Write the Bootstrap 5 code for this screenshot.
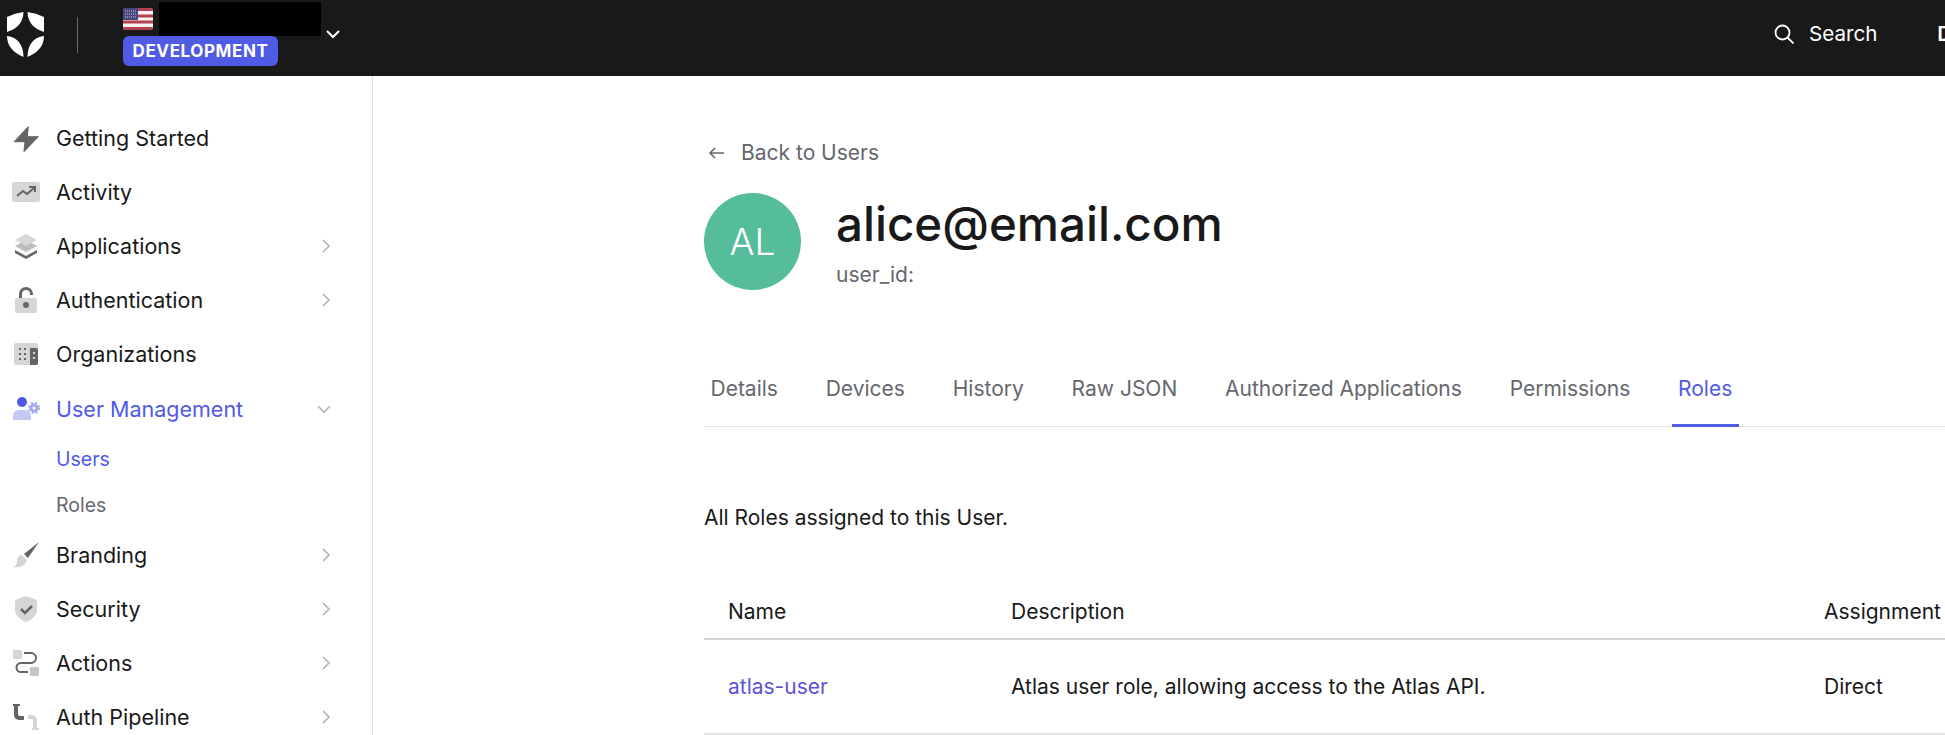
<!DOCTYPE html>
<html lang="en">
<head>
    <meta charset="UTF-8">
    <meta name="viewport" content="width=device-width, initial-scale=1.0">
    <title>User Details</title>
    <link href="https://cdn.jsdelivr.net/npm/bootstrap@5.3.3/dist/css/bootstrap.min.css" rel="stylesheet">
    <style>
        html, body {
            height: 100%;
            overflow: hidden;
        }

        body {
            font-family: Inter, "Liberation Sans", sans-serif;
            font-size: 21px;
            color: #191919;
            background-color: #ffffff;
        }

        .top-bar {
            height: 76px;
            padding-bottom: 7px;
            background-color: #191919;
            color: #ffffff;
        }

        .logo-box {
            width: 77px;
            padding-left: 7px;
        }

        .bar-sep {
            width: 1px;
            height: 36px;
            background-color: #65676e;
        }

        .tenant-box {
            margin-left: 45px;
            width: 155px;
            align-self: flex-start;
            padding-top: 2px;
        }

        .flag-row {
            height: 34px;
            width: 198px;
        }

        .redact-box {
            width: 162px;
            height: 34px;
            background-color: #000000;
            margin-left: 6px;
            flex-shrink: 0;
        }

        .env-tag {
            background-color: #4f5ae5;
            border-radius: 6px;
            font-size: 17px;
            font-weight: 700;
            letter-spacing: .6px;
            height: 30px;
            line-height: 30px;
            width: 155px;
            text-align: center;
        }

        .tenant-caret {
            margin-left: 47px;
            margin-top: -1px;
        }

        .search-box {
            margin-left: auto;
            gap: 15px;
            font-size: 20.600px;
            width: 171px;
            white-space: nowrap;
            overflow: hidden;
        }

        .user-initial {
            font-weight: 600;
            margin-left: 45px;
        }

        .page-body {
            height: 659px;
        }

        .side-col {
            width: 373px;
            flex-shrink: 0;
            border-right: 1px solid #e3e3e5;
            padding-top: 35px;
        }

        .side-link {
            height: 54px;
            flex-shrink: 0;
            font-size: 21.500px;
            padding: 0 41px 0 12px;
            color: #191919;
        }

        .side-link svg.ico {
            width: 28px;
            height: 28px;
            margin-right: 16px;
            flex-shrink: 0;
        }

        .side-link .arrow {
            margin-left: auto;
        }

        .side-link.is-open {
            color: #4f5ae5;
            height: 56px;
        }

        .side-sub {
            display: block;
            flex-shrink: 0;
            padding-left: 56px;
            color: #65676e;
            font-size: 19.500px;
            line-height: 45.500px;
        }

        .side-sub.is-on {
            color: #4f5ae5;
        }

        .content-col {
            padding-left: 331px;
            padding-top: 61px;
            min-width: 0;
            flex-grow: 1;
            overflow: hidden;
        }

        .back-link {
            color: #65676e;
            height: 32px;
            gap: 17px;
        }

        .user-head {
            margin-top: 24px;
            height: 97px;
        }

        .avatar-dot {
            width: 97px;
            height: 97px;
            background-color: #55bc9c;
            color: #ffffff;
            font-size: 37px;
            font-weight: 300;
            margin-right: 35px;
        }

        .user-text {
            padding-top: 4px;
        }

        .user-mail {
            font-size: 47.500px;
            font-weight: 500;
            line-height: 56px;
            margin: 0;
        }

        .user-idline {
            color: #65676e;
            font-size: 21px;
            margin-top: 7px;
        }

        .tab-strip {
            margin-top: 69px;
            border-bottom: 1px solid #e3e3e5;
            gap: 34.800px;
            font-size: 21px;
            width: 1800px;
        }

        .tab-strip .nav-link {
            color: #65676e;
            padding: 0 6.500px;
            height: 68px;
            line-height: 60px;
            border-bottom: 3px solid transparent;
            margin-bottom: -1px;
        }

        .tab-strip .nav-link.active {
            color: #4f5ae5;
            border-bottom-color: #4f5ae5;
        }

        .tab-note {
            margin: 0;
            padding-top: 77px;
            line-height: 27px;
        }

        .roles-table {
            margin-top: 54px;
            width: 1469px;
            table-layout: fixed;
        }

        .roles-table th {
            font-weight: 400;
            padding: 0 24px;
            height: 54px;
            border-bottom: 2px solid #d6d6d8;
            vertical-align: middle;
        }

        .roles-table td {
            padding: 0 24px;
            height: 95px;
            vertical-align: middle;
            border-bottom: 2px solid #e3e3e5;
        }

        .role-link {
            color: #5a55d2;
            text-decoration: none;
        }
    </style>
</head>
<body>
    <header class="top-bar d-flex align-items-center">
        <div class="logo-box d-flex align-items-center">
            <svg width="38" height="46" viewBox="0 0 38 46" fill="#fff">
                <path d="M0 5Q8 1 16.500 0Q16 15 0 20Z"/>
                <path d="M20.500 0Q29 1 37 5V20Q21 15 20.500 0Z"/>
                <path d="M0 24Q16 26 16.500 45Q0 38 0 24Z"/>
                <path d="M37 24Q21 26 20.500 45Q37 38 37 24Z"/>
            </svg>
        </div>
        <div class="bar-sep"></div>
        <div class="tenant-box">
            <div class="flag-row d-flex align-items-center">
                <svg width="30" height="22" viewBox="0 0 30 22" class="flex-shrink-0">
                    <rect width="30" height="22" rx="3" fill="#f4f4f4"/>
                    <path d="M0 3a3 3 0 0 1 3-3h24a3 3 0 0 1 3 3H0ZM0 6.500h30v3H0ZM0 12.500h30v3H0ZM0 19h30a3 3 0 0 1-3 3H3a3 3 0 0 1-3-3Z" fill="#b5404f"/>
                    <path d="M0 3a3 3 0 0 1 3-3h12v12H0Z" fill="#46467f"/>
                    <path d="M2 3h11M2 6h11M2 9h11" stroke="#c9c9dd" stroke-width="1.200" stroke-dasharray="1 1"/>
                </svg>
                <div class="redact-box"></div>
            </div>
            <div class="env-tag">DEVELOPMENT</div>
        </div>
        <svg class="tenant-caret" width="16" height="10" viewBox="0 0 16 10" fill="none" stroke="#fff" stroke-width="2"><path d="M2 2l6 6 6-6"/></svg>
        <div class="search-box d-flex align-items-center">
            <svg class="flex-shrink-0" width="20" height="20" viewBox="0 0 20 20" fill="none" stroke="#fff" stroke-width="1.800"><circle cx="8.500" cy="8.500" r="7"/><path d="M13.500 13.500l6 6"/></svg>
            <span>Search</span>
            <span class="user-initial">D</span>
        </div>
    </header>

    <div class="page-body d-flex">
        <nav class="side-col nav flex-column flex-nowrap">
            <a class="side-link d-flex align-items-center text-decoration-none" href="#">
                <svg class="ico" viewBox="0 0 28 28"><path d="M16.300 2.700L2 17.700H13L12 27.700L26.300 12.700H15.300Z" fill="#656565" stroke="#656565" stroke-linejoin="round"/></svg>
                Getting Started
            </a>
            <a class="side-link d-flex align-items-center text-decoration-none" href="#">
                <svg class="ico" viewBox="0 0 28 28"><rect y="4" width="28" height="20" rx="2" fill="#d6d6d6"/><path d="M5 18l6-5 4 3 7-6M17 9h6v5" fill="none" stroke="#656565" stroke-width="2"/></svg>
                Activity
            </a>
            <a class="side-link d-flex align-items-center text-decoration-none" href="#">
                <svg class="ico" viewBox="0 0 28 28"><path d="M3 18l11 6 11-6v3l-11 6-11-6z" fill="#656565"/><path d="M3 14l11 6 11-6-11-6z" fill="#bdbdbd"/><path d="M3 8l11 6 11-6-11-6z" fill="#d6d6d6"/></svg>
                Applications
                <svg class="arrow" width="10" height="14" viewBox="0 0 10 14" fill="none" stroke="#b3b3b3" stroke-width="1.600"><path d="M2 1l6 6-6 6"/></svg>
            </a>
            <a class="side-link d-flex align-items-center text-decoration-none" href="#">
                <svg class="ico" viewBox="0 0 28 28"><path d="M7 13V8a7 7 0 0 1 14 0v1h-3V8a4 4 0 0 0-8 0v5z" fill="#656565"/><rect x="3" y="12" width="22" height="15" rx="2" fill="#d6d6d6"/><circle cx="14" cy="19" r="3" fill="#656565"/></svg>
                Authentication
                <svg class="arrow" width="10" height="14" viewBox="0 0 10 14" fill="none" stroke="#b3b3b3" stroke-width="1.600"><path d="M2 1l6 6-6 6"/></svg>
            </a>
            <a class="side-link d-flex align-items-center text-decoration-none" href="#">
                <svg class="ico" viewBox="0 0 28 28"><rect x="2" y="3" width="24" height="22" rx="2" fill="#d6d6d6"/><path d="M18 8h6a2 2 0 0 1 2 2v13a2 2 0 0 1-2 2h-6z" fill="#656565"/><path d="M7 8h2v2H7zM12 8h2v2h-2zM7 13h2v2H7zM12 13h2v2h-2zM7 18h2v2H7zM12 18h2v2h-2z" fill="#656565"/><path d="M21 12h2v2h-2zM21 17h2v2h-2z" fill="#d6d6d6"/></svg>
                Organizations
            </a>
            <a class="side-link is-open d-flex align-items-center text-decoration-none" href="#">
                <svg class="ico" viewBox="0 0 28 28"><circle cx="10" cy="7" r="5" fill="#4f5ae5"/><path d="M1 25v-4a6 6 0 0 1 6-6h6a6 6 0 0 1 6 6v4z" fill="#c5c8f5"/><circle cx="22" cy="13" r="3" fill="none" stroke="#a6abf0" stroke-width="3"/><circle cx="22" cy="13" r="5" fill="none" stroke="#a6abf0" stroke-width="2" stroke-dasharray="2 2"/></svg>
                User Management
                <svg class="arrow" width="14" height="10" viewBox="0 0 14 10" fill="none" stroke="#b3b3b3" stroke-width="1.600"><path d="M1 2l6 6 6-6"/></svg>
            </a>
            <a class="side-sub is-on text-decoration-none" href="#">Users</a>
            <a class="side-sub text-decoration-none" href="#">Roles</a>
            <a class="side-link d-flex align-items-center text-decoration-none" href="#">
                <svg class="ico" viewBox="0 0 28 28"><path d="M27 1L12 13l4 4z" fill="#656565"/><path d="M10 14l5 5c-1 6-8 8-14 7 4-2 4-4 4-7 0-3 2-5 5-5z" fill="#d6d6d6"/></svg>
                Branding
                <svg class="arrow" width="10" height="14" viewBox="0 0 10 14" fill="none" stroke="#b3b3b3" stroke-width="1.600"><path d="M2 1l6 6-6 6"/></svg>
            </a>
            <a class="side-link d-flex align-items-center text-decoration-none" href="#">
                <svg class="ico" viewBox="0 0 28 28"><path d="M14 1l11 4v10c0 6-6 10-11 12C9 25 3 21 3 15V5z" fill="#d6d6d6"/><path d="M9 14l4 4 7-7" fill="none" stroke="#656565" stroke-width="2.500"/></svg>
                Security
                <svg class="arrow" width="10" height="14" viewBox="0 0 10 14" fill="none" stroke="#b3b3b3" stroke-width="1.600"><path d="M2 1l6 6-6 6"/></svg>
            </a>
            <a class="side-link d-flex align-items-center text-decoration-none" href="#">
                <svg class="ico" viewBox="0 0 28 28"><rect x="1" y="1" width="9" height="9" rx="1" fill="#d6d6d6"/><rect x="18" y="18" width="9" height="9" rx="1" fill="#c4c4c4"/><path d="M12 4h7a5 5 0 0 1 0 10H9a4.500 4.500 0 0 0 0 9h7" fill="none" stroke="#656565" stroke-width="2"/></svg>
                Actions
                <svg class="arrow" width="10" height="14" viewBox="0 0 10 14" fill="none" stroke="#b3b3b3" stroke-width="1.600"><path d="M2 1l6 6-6 6"/></svg>
            </a>
            <a class="side-link d-flex align-items-center text-decoration-none" href="#">
                <svg class="ico" viewBox="0 0 28 28"><path d="M1 1h7v2H6v8a2 2 0 0 0 2 2h4v4H7a5 5 0 0 1-5-5V3H1z" fill="#656565"/><path d="M16 12h4a5 5 0 0 1 5 5v8h2v2h-7v-2h1v-8a1 1 0 0 0-1-1h-4z" fill="#d6d6d6"/></svg>
                Auth Pipeline
                <svg class="arrow" width="10" height="14" viewBox="0 0 10 14" fill="none" stroke="#b3b3b3" stroke-width="1.600"><path d="M2 1l6 6-6 6"/></svg>
            </a>
        </nav>

        <main class="content-col">
            <a class="back-link d-flex align-items-center text-decoration-none" href="#">
                <svg class="ms-1" width="16" height="12" viewBox="0 0 16 12" fill="none" stroke="#65676e" stroke-width="1.600"><path d="M16 6H2M7 1L2 6l5 5"/></svg>
                Back to Users
            </a>
            <div class="user-head d-flex align-items-center">
                <div class="avatar-dot rounded-circle d-flex align-items-center justify-content-center flex-shrink-0">AL</div>
                <div class="user-text">
                    <h1 class="user-mail">alice@email.com</h1>
                    <div class="user-idline">user_id:</div>
                </div>
            </div>

            <ul class="tab-strip nav">
                <li class="nav-item"><a class="nav-link" href="#">Details</a></li>
                <li class="nav-item"><a class="nav-link" href="#">Devices</a></li>
                <li class="nav-item"><a class="nav-link" href="#">History</a></li>
                <li class="nav-item"><a class="nav-link" href="#">Raw JSON</a></li>
                <li class="nav-item"><a class="nav-link" href="#">Authorized Applications</a></li>
                <li class="nav-item"><a class="nav-link" href="#">Permissions</a></li>
                <li class="nav-item"><a class="nav-link active" href="#">Roles</a></li>
            </ul>

            <p class="tab-note">All Roles assigned to this User.</p>

            <table class="roles-table">
                <colgroup>
                    <col width="283">
                    <col width="813">
                    <col>
                </colgroup>
                <thead>
                    <tr>
                        <th>Name</th>
                        <th>Description</th>
                        <th>Assignment</th>
                    </tr>
                </thead>
                <tbody>
                    <tr>
                        <td><a class="role-link" href="#">atlas-user</a></td>
                        <td>Atlas user role, allowing access to the Atlas API.</td>
                        <td>Direct</td>
                    </tr>
                </tbody>
            </table>
        </main>
    </div>
    <script src="https://cdn.jsdelivr.net/npm/bootstrap@5.3.3/dist/js/bootstrap.bundle.min.js"></script>
</body>
</html>
